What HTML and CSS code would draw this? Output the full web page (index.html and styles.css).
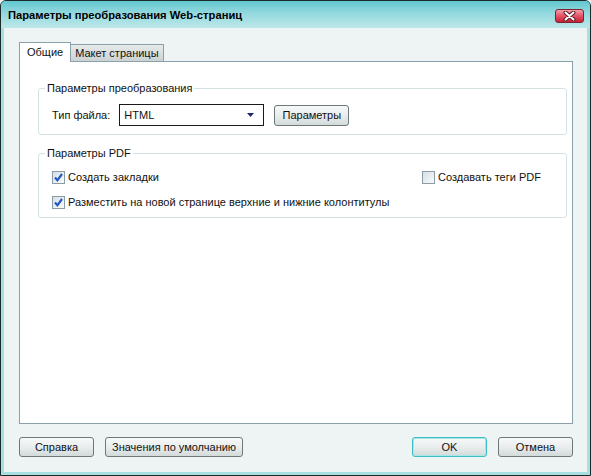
FILE: index.html
```html
<!DOCTYPE html>
<html lang="ru">

<head>
    <meta charset="UTF-8">
    <title>Параметры преобразования Web-страниц</title>
    <link rel="stylesheet" href="styles.css">
</head>

<body>
    <div class="window">
        <div class="titlebar">
            <span class="title">Параметры преобразования Web-страниц</span>
            <button class="close">
                <svg width="13" height="10" viewBox="0 0 13 10">
                    <path d="M2.5 1.5l8 7M10.5 1.5l-8 7" stroke="#5a1a22" stroke-width="4" stroke-linecap="round" />
                    <path d="M2.5 1.5l8 7M10.5 1.5l-8 7" stroke="#ffffff" stroke-width="2" stroke-linecap="round" />
                </svg>
            </button>
        </div>

        <div class="client">
            <div class="tabs">
                <div class="tab active">Общие</div>
                <div class="tab">Макет страницы</div>
            </div>

            <div class="tab-panel">
                <fieldset class="group">
                    <legend>Параметры преобразования</legend>
                    <div class="file-row">
                        <span class="label">Тип файла:</span>
                        <div class="combo">
                            <span>HTML</span>
                            <svg class="arrow" width="7" height="4" viewBox="0 0 7 4">
                                <path d="M0 0h7L3.5 4z" fill="#1b2a6e" />
                            </svg>
                        </div>
                        <button class="btn">Параметры</button>
                    </div>
                </fieldset>

                <fieldset class="group pdf">
                    <legend>Параметры PDF</legend>
                    <div class="check-grid">
                        <label class="check">
                            <span class="box checked">
                                <svg width="11" height="11" viewBox="0 0 11 11">
                                    <path d="M2 5.5l2.4 2.8L9 2" fill="none" stroke="#2257c8" stroke-width="2.2" />
                                </svg>
                            </span>
                            Создать закладки
                        </label>
                        <label class="check">
                            <span class="box"></span>
                            Создавать теги PDF
                        </label>
                        <label class="check wide">
                            <span class="box checked">
                                <svg width="11" height="11" viewBox="0 0 11 11">
                                    <path d="M2 5.5l2.4 2.8L9 2" fill="none" stroke="#2257c8" stroke-width="2.2" />
                                </svg>
                            </span>
                            Разместить на новой странице верхние и нижние колонтитулы
                        </label>
                    </div>
                </fieldset>
            </div>

            <div class="footer">
                <button class="btn">Справка</button>
                <button class="btn">Значения по умолчанию</button>
                <span class="spacer"></span>
                <button class="btn default">OK</button>
                <button class="btn">Отмена</button>
            </div>
        </div>
    </div>
</body>

</html>
```

FILE: styles.css
```css
* {
    margin: 0;
    padding: 0;
    box-sizing: border-box;
    font-family: 'Liberation Sans', Arial, sans-serif;
}

body {
    background-color: #eef3f3;
}

.window {
    width: 591px;
    height: 476px;
    border: 1px solid #1c2a2a;
    border-radius: 6px 6px 0 0;
    background-color: #a8dfe0;
    display: flex;
    flex-direction: column;
    overflow: hidden;
}

/* title bar */

.titlebar {
    height: 27px;
    display: flex;
    align-items: center;
    justify-content: space-between;
    padding: 0 6px 0 7px;
    background: linear-gradient(to bottom, #63c7d0, #93d9de 45%, #bde8ea);
}

.title {
    font-size: 11.2px;
    font-weight: bold;
    color: #000;
}

.close {
    width: 29px;
    height: 14px;
    margin-top: 2px;
    border: 1px solid #7a2430;
    border-radius: 3px;
    background: linear-gradient(to bottom, #f3a0aa, #e45a6c 45%, #c81f36);
    display: flex;
    align-items: center;
    justify-content: center;
}

/* client area */

.client {
    flex: 1;
    margin: 0 3px 3px;
    background-color: #eef3f3;
    padding: 14px 14px 15px 15px;
    display: flex;
    flex-direction: column;
    font-size: 11px;
    color: #111;
}

.tabs {
    display: flex;
    align-items: flex-end;
    position: relative;
    z-index: 1;
}

.tab {
    height: 17px;
    padding: 0 4px;
    border: 1px solid #8aa0aa;
    border-bottom: none;
    background: linear-gradient(to bottom, #e6eaea, #ccd2d2);
    display: flex;
    align-items: center;
    margin-left: -1px;
}

.tab.active {
    height: 20px;
    margin-left: 0;
    margin-bottom: -1px;
    background: #ffffff;
    padding: 0 7px 2px;
    position: relative;
    z-index: 1;
}

.tab-panel {
    flex: 1;
    background-color: #ffffff;
    border: 1px solid #8aa0aa;
    padding: 19px 5px 0 18px;
}

.group {
    border: 1px solid #d3e3e3;
    border-radius: 3px;
    padding: 9px 14px 8px;
}

.group legend {
    margin-left: -8px;
    padding: 0 2px;
    line-height: 14px;
}

.group.pdf {
    margin-top: 11px;
    padding-bottom: 7px;
}

.file-row {
    display: flex;
    align-items: center;
    margin-left: -1px;
}

.label {
    margin-right: 9px;
}

.combo {
    width: 145px;
    height: 22px;
    border: 1px solid #1a1a1a;
    display: flex;
    align-items: center;
    justify-content: space-between;
    padding: 0 9px 0 4px;
    margin-right: 10px;
}

.btn {
    height: 20px;
    min-width: 75px;
    padding: 0 6px;
    font-size: 11px;
    color: #111;
    border: 1px solid #6f7878;
    border-radius: 3px;
    background: linear-gradient(to bottom, #f7f9f9, #e9eded 50%, #d3dada);
}

.file-row .btn {
    height: 21px;
    padding: 0 4px;
}

/* checkboxes */

.check-grid {
    display: grid;
    grid-template-columns: 1fr 129px;
    row-gap: 9px;
}

.check {
    display: flex;
    align-items: center;
    height: 16px;
    margin-left: -1px;
}

.check.wide {
    grid-column: 1 / 3;
}

.box {
    width: 13px;
    height: 13px;
    border: 1px solid #8a9ca6;
    background: linear-gradient(135deg, #d8e0e3, #f8fafa);
    margin-right: 3px;
    display: flex;
    align-items: center;
    justify-content: center;
}

/* footer buttons */

.footer {
    display: flex;
    gap: 11px;
    margin-top: 13px;
}

.spacer {
    flex: 1;
}

.btn.default {
    border: 1px solid #3cbfc4;
    box-shadow: inset 0 0 0 1px #a8e6e8;
}
```
